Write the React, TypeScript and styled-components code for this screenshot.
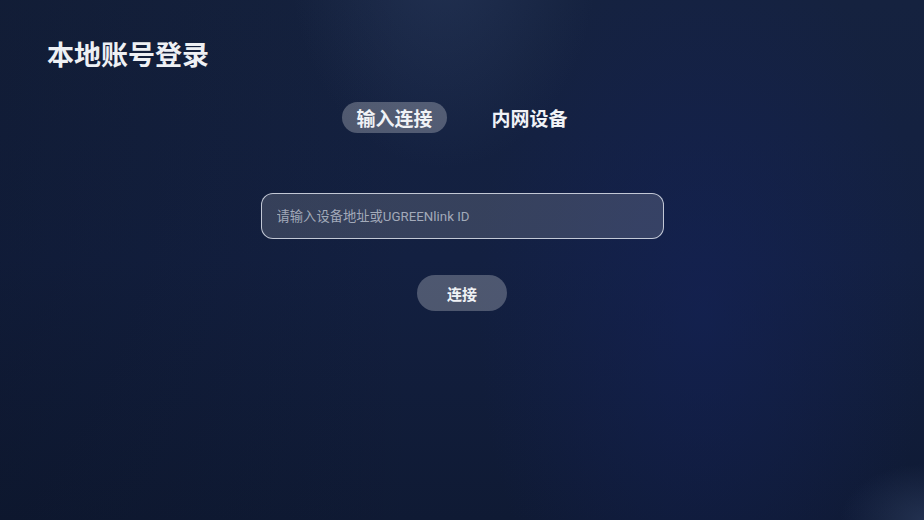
import React, { useState } from "react";
import styled, { createGlobalStyle } from "styled-components";

const Global = createGlobalStyle`
  html, body { margin: 0; padding: 0; width: 100%; height: 100%; overflow: hidden; }
  body { font-family: "Noto Sans CJK SC", "Noto Sans", sans-serif; }
  #root { width: 100%; height: 100%; }
`;

const Page = styled.div`
  position: relative;
  width: 924px;
  height: 520px;
  overflow: hidden;
  box-sizing: border-box;
  padding: 34px 0 0 47px;
  color: #f2f4f8;
  background:
    radial-gradient(ellipse 220px 300px at 48% -8%, rgba(60, 80, 120, 0.3), transparent 70%),
    radial-gradient(ellipse 300px 520px at 76% 60%, rgba(20, 34, 90, 0.55), transparent 75%),
    radial-gradient(ellipse 120px 80px at 100% 100%, rgba(70, 90, 130, 0.35), transparent 70%),
    linear-gradient(90deg, rgba(8, 14, 28, 0.25) 0%, transparent 45%),
    linear-gradient(180deg, #15223f 0%, #132041 50%, #0f1a34 100%);
`;

const Title = styled.h1`
  margin: 0;
  font-size: 27px;
  font-weight: 700;
  line-height: 40px;
  color: #eef0f4;
`;

const Center = styled.div`
  width: 924px;
  margin-left: -47px;
  display: flex;
  flex-direction: column;
  align-items: center;
`;

const Tabs = styled.div`
  display: flex;
  align-items: center;
  gap: 31px;
  margin-top: 28px;
`;

const Tab = styled.button<{ $active?: boolean }>`
  border: none;
  font-family: inherit;
  cursor: pointer;
  height: 31px;
  padding: 0 14px;
  border-radius: 16px;
  font-size: 19px;
  font-weight: 700;
  color: #f0f2f6;
  background: ${(p) => (p.$active ? "rgba(255,255,255,0.26)" : "transparent")};
  line-height: 31px;
`;

const Input = styled.input`
  box-sizing: border-box;
  width: 403px;
  height: 46px;
  margin-top: 60px;
  padding: 0 15px;
  border-radius: 12px;
  border: 1.5px solid rgba(220, 225, 235, 0.85);
  background: rgba(255, 255, 255, 0.15);
  color: #fff;
  font-family: "Roboto", "Noto Sans CJK SC", sans-serif;
  font-size: 13.3px;
  outline: none;
  &::placeholder { color: rgba(200, 206, 218, 0.75); }
`;

const Connect = styled.button`
  margin-top: 36px;
  width: 90px;
  height: 36px;
  border: none;
  border-radius: 18px;
  background: rgba(255, 255, 255, 0.25);
  color: #f0f2f6;
  font-family: inherit;
  font-size: 15px;
  font-weight: 700;
  cursor: pointer;
`;

export default function App() {
  const [tab, setTab] = useState(0);
  return (
    <>
      <Global />
      <Page>
        <Title>本地账号登录</Title>
        <Center>
          <Tabs>
            <Tab $active={tab === 0} onClick={() => setTab(0)}>输入连接</Tab>
            <Tab $active={tab === 1} onClick={() => setTab(1)}>内网设备</Tab>
          </Tabs>
          <Input placeholder="请输入设备地址或UGREENlink ID" />
          <Connect>连接</Connect>
        </Center>
      </Page>
    </>
  );
}
